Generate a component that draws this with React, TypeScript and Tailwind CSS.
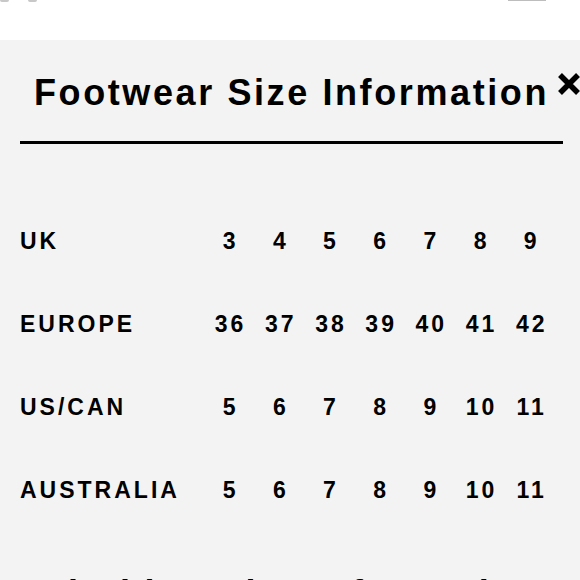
import React from 'react';

const rows = [
  { label: 'UK', sizes: ['3', '4', '5', '6', '7', '8', '9'] },
  { label: 'EUROPE', sizes: ['36', '37', '38', '39', '40', '41', '42'] },
  { label: 'US/CAN', sizes: ['5', '6', '7', '8', '9', '10', '11'] },
  { label: 'AUSTRALIA', sizes: ['5', '6', '7', '8', '9', '10', '11'] },
];

const CloseIcon = () => (
  <svg width="26" height="24" viewBox="0 0 26 24" className="block">
    <path d="M4 3 L22 21 M22 3 L4 21" stroke="#000" strokeWidth="5.5" strokeLinecap="butt" />
  </svg>
);

const App = () => {
  return (
    <div className="w-[580px] h-[580px] overflow-hidden bg-[#f3f3f3] font-['Liberation_Sans',Arial,sans-serif] text-black">
      <header className="relative h-[40px] bg-white">
        <span className="absolute left-0 top-0 h-[2px] w-[9px] rounded-b bg-[#c8c8c8]" />
        <span className="absolute left-[28px] top-0 h-[2px] w-[9px] rounded-b bg-[#c8c8c8]" />
        <span className="absolute left-[508px] top-0 h-[1px] w-[38px] bg-[#bdbdbd]" />
      </header>

      <section className="relative">
        <h2 className="pt-[35px] pl-[3px] text-center text-[36px] leading-none font-bold tracking-[2.6px]">
          Footwear Size Information
        </h2>
        <button className="absolute left-[556px] top-[32px]">
          <CloseIcon />
        </button>

        <div className="ml-[20px] mt-[30px] h-[3px] w-[543px] bg-black" />

        <div className="mt-[56px] grid grid-cols-[184px_repeat(7,50.2px)] pl-[20px]">
          {rows.map((row) => (
            <React.Fragment key={row.label}>
              <div className="flex h-[83px] items-center text-[23px] font-bold tracking-[3px]">
                {row.label}
              </div>
              {row.sizes.map((s, i) => (
                <div
                  key={i}
                  className="flex h-[83px] items-center justify-center pl-[3px] text-[23px] font-bold tracking-[3px]"
                >
                  {s}
                </div>
              ))}
            </React.Fragment>
          ))}
        </div>

        <h2 className="mt-[44px] text-center text-[36px] leading-none font-bold tracking-[2.6px]">
          Clothing Size Information
        </h2>
      </section>
    </div>
  );
};

export default App;
